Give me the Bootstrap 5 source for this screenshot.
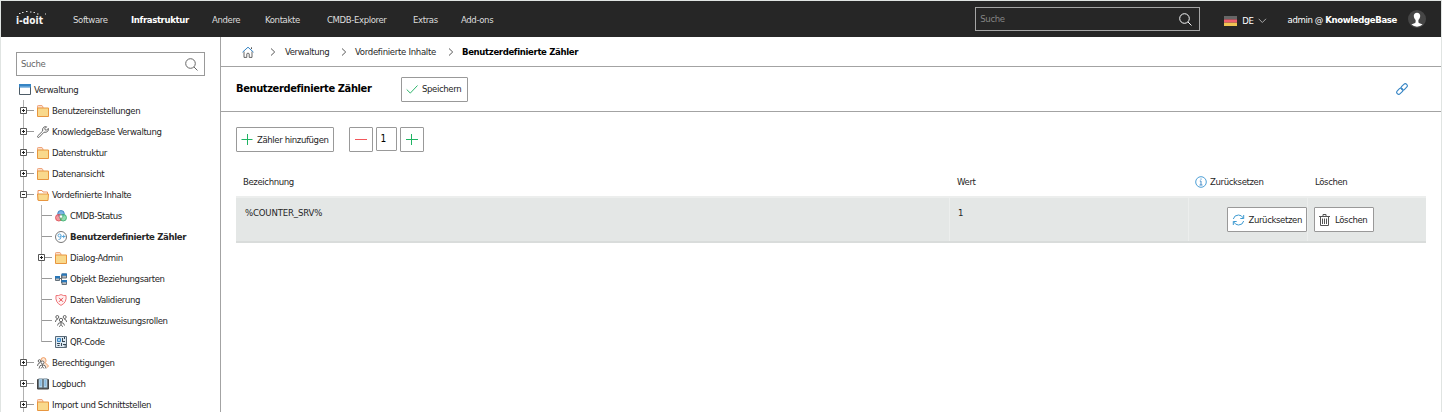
<!DOCTYPE html>
<html lang="de">
<head>
<meta charset="utf-8">
<meta name="viewport" content="width=device-width, initial-scale=1">
<title>i-doit – Benutzerdefinierte Zähler</title>
<link href="https://cdn.jsdelivr.net/npm/bootstrap@5.3.0/dist/css/bootstrap.min.css" rel="stylesheet">
<style>
html,body{height:100%}
body{font-family:"DejaVu Sans Condensed","DejaVu Sans",sans-serif;font-stretch:condensed;font-size:9.5px;letter-spacing:-.38px;line-height:14px;color:#262626;overflow:hidden;background:#fff;white-space:nowrap}
b,.fw-bold{letter-spacing:-.36px}
svg{display:block;flex:none;fill:none}
.frame{height:412px;border:1px solid #e0e4e2;border-bottom:0}
.topbar{height:36px;background:#262626;color:#ddd}
.brand{width:72px;padding-left:15px;letter-spacing:0}
.mainnav{display:grid;grid-template-columns:58px 81px 53px 62px 86px 48px 50px;padding-top:2px}
.mainnav a,.crumbs a{color:inherit;text-decoration:none}
.mainnav .active{color:#fff}
.topsearch{width:225px;height:24px;border:1px solid #a5a5a5;color:#858585;padding:0 7px 0 4px}
.flag-label{margin-left:5px}
.user{margin:2px 15px 0 21px}
.user svg{margin:-2px 0 0 11px}
.sidebar{width:219px;padding:15px 0 0 15px;overflow:hidden}
.sidesearch{width:189px;height:24px;border:1px solid #999;color:#666;padding:0 6px 0 4px}
.content{border-left:1px solid #a3a3a3}
.crumbs{height:30px;border-bottom:1px solid #a3a3a3;display:grid;grid-template-columns:29px 14px 56px 14px 93px 14px auto;padding-left:21px;align-items:center}
.crumbs a:nth-of-type(2){letter-spacing:-.3px}
.titlebar{height:45px;border-bottom:1px solid #a3a3a3;padding:0 33px 0 15px}
.titlebar h1{font-size:11px;line-height:16px;color:#000;width:165px;letter-spacing:-.37px}
.btn-tool{--bs-btn-font-size:9.5px;--bs-btn-line-height:14px;--bs-btn-padding-x:4px;--bs-btn-padding-y:0;--bs-btn-color:#262626;--bs-btn-bg:#fff;--bs-btn-border-color:#999;--bs-btn-border-radius:1px;height:25px;display:inline-flex;align-items:center;gap:4px;letter-spacing:-.38px}
.btn-roomy{padding-right:6px}
.toolbar{padding:15px 0 0 15px}
.stepper{margin-left:15px;gap:3px}
.count{width:21px;height:24px;border:1px solid #999;border-radius:1px;color:#000;padding:4px 0 0 4px;font-size:10px}
.tree{margin:3px 0 0;padding:0;list-style:none}
.tree li{height:21px;display:flex;align-items:center}
.tree li.root{padding-left:3px}
.tree span{margin-left:3px}
.tree .lv1{padding-left:4px;background:linear-gradient(#b0b0b0,#b0b0b0) 7px 0/1px 100% no-repeat}
.tree .lv2{padding-left:22px;background:linear-gradient(#b0b0b0,#b0b0b0) 7px 0/1px 100% no-repeat,linear-gradient(#b0b0b0,#b0b0b0) 25px 0/1px 100% no-repeat}
.tree .lv2.last{background-size:1px 100%,1px 11px}
.tree .arm{width:17px;height:9px}
.counters{margin:16px 15px 0 15px}
.cols{display:grid;grid-template-columns:713px 239px 119px 119px}
.thead-row{height:28px;align-items:center}
.trow{height:47px;background:#e4e7e6;border-top:2px solid #eceeed;border-bottom:2px solid #d9dcdb}
.trow>div+div{border-left:1px solid #eceeed}
.trow .val{padding:8px 0 0 8px}
.trow .name{padding-left:9px;letter-spacing:-.15px}
</style>
</head>
<body>
<svg width="0" height="0" class="position-absolute">
<defs>
<symbol id="folder" viewBox="0 0 12 12"><path d="M.5 3V1.200Q.5.500 1.200.500H5l1 1.500V3" fill="#fbe0cc" stroke="#efa57e"/><path d="M.5 3h11v8.500H.5z" fill="#f9d98c" stroke="#e8963f"/></symbol>
<symbol id="folder-open" viewBox="0 0 12 12"><path d="M1 11V1.500h4L6 3h4.500v2" fill="#fff" stroke="#ec9160"/><path d="M.5 5h11l-.5 6.500H1.200z" fill="#f9d98c" stroke="#e8963f"/></symbol>
<symbol id="plus-box" viewBox="0 0 17 9"><path d="M7 4.500h7" stroke="#999"/><path d="M.5 1.500h6v6h-6z" fill="#fff" stroke="#555"/><path d="M2 4.500h3M3.500 3v3" stroke="#222"/></symbol>
<symbol id="minus-box" viewBox="0 0 17 9"><path d="M7 4.500h7" stroke="#999"/><path d="M.5 1.500h6v6h-6z" fill="#fff" stroke="#555"/><path d="M2 4.500h3" stroke="#222"/></symbol>
<symbol id="branch" viewBox="0 0 17 9"><path d="M4 4.500h10" stroke="#999"/></symbol>
<symbol id="lens" viewBox="0 0 13 13"><circle cx="5.500" cy="5.500" r="4.800" stroke="currentColor"/><path d="m9 9 3.500 3.500" stroke="currentColor"/></symbol>
<symbol id="chev" viewBox="0 0 6 8"><path d="m1 .5 3.700 3.500L1 7.500" stroke="#444" stroke-width=".9"/></symbol>
<symbol id="people" viewBox="0 0 12 12"><g stroke="#444" stroke-width=".8"><circle cx="2.300" cy="2" r="1.500"/><circle cx="9.700" cy="2" r="1.500"/><circle cx="6" cy="5" r="1.700"/><path d="M.4 7Q.5 4.200 2.800 4.200M11.600 7Q11.500 4.200 9.200 4.200M2.500 10.500Q2.800 7.500 6 7.500T9.500 10.500M6 8v1.500L4.300 11.800M6 9.500l1.700 2.300"/></g></symbol>
</defs>
</svg>
<div class="frame d-flex flex-column">
<header class="topbar d-flex align-items-center flex-shrink-0">
  <div class="brand">
    <svg width="34" height="18" viewBox="0 0 34 18"><text x="0" y="13.500" font-family="DejaVu Sans" font-size="11" font-weight="bold" fill="#f5f5f5" textLength="27" lengthAdjust="spacingAndGlyphs">i-doit</text><path d="M3 3.500h1.500M6 2.500h1.500M10 1.500h1.500M14 2h1.500M17.500 2.500h1.500M21 4h1.500M29 4h1" stroke="#ddd"/></svg>
  </div>
  <nav class="mainnav me-auto">
    <a href="#">Software</a><a href="#" class="active fw-bold">Infrastruktur</a><a href="#">Andere</a><a href="#">Kontakte</a><a href="#">CMDB-Explorer</a><a href="#">Extras</a><a href="#">Add-ons</a>
  </nav>
  <div class="topsearch d-flex align-items-center justify-content-between"><span>Suche</span><svg width="13" height="13" class="text-light"><use href="#lens"/></svg></div>
  <div class="d-flex align-items-center text-white ms-4 pt-1">
    <svg width="13" height="10" viewBox="0 0 13 10"><path d="M0 0h13v3.400H0z" fill="#666"/><path d="M0 3.400h13v3.300H0z" fill="#ed5f6d"/><path d="M0 6.700h13V10H0z" fill="#efc452"/></svg>
    <span class="flag-label">DE</span>
    <svg class="ms-1" width="9" height="6" viewBox="0 0 9 6"><path d="m.7.800 3.600 3.700L8 .8" stroke="#aaa"/></svg>
  </div>
  <div class="user d-flex align-items-center text-white"><span>admin @ <b>KnowledgeBase</b></span>
    <svg width="18" height="18" viewBox="0 0 18 18"><circle cx="9" cy="9" r="9" fill="#464646"/><path d="M9 2.700c2.200 0 3.300 1.500 3.200 3.400-.1 1.800-.9 3.200-1.800 3.800v2.300c.2 1.200 3 1.400 4.200 2.400A8.500 8.500 0 0 1 3.400 14.600c1.200-1 4-1.200 4.200-2.400V9.900C6.700 9.300 5.900 7.900 5.800 6.100 5.700 4.200 6.800 2.700 9 2.700z" fill="#fff"/></svg>
  </div>
</header>
<div class="d-flex flex-grow-1">
<aside class="sidebar flex-shrink-0">
  <div class="sidesearch d-flex align-items-center justify-content-between"><span>Suche</span><svg width="13" height="13"><use href="#lens"/></svg></div>
  <ul class="tree">
    <li class="root"><svg width="12" height="11" viewBox="0 0 12 11"><path d="M.5.500h11v10H.5z" fill="#fff" stroke="#4d5b66"/><path d="M0 0h12v3.500H0z" fill="#3584c4"/><path d="M1 3h10" stroke="#8fc0e8"/></svg><span>Verwaltung</span></li>
    <li class="lv1"><svg class="arm"><use href="#plus-box"/></svg><svg width="12" height="12"><use href="#folder"/></svg><span>Benutzereinstellungen</span></li>
    <li class="lv1"><svg class="arm"><use href="#plus-box"/></svg><svg width="12" height="12" viewBox="0 0 12 12"><path d="M.8 9.800 5.700 5Q5 2.500 6.800 1.200 8.200.3 9.600.8L7.800 2.600l.4 1.300 1.300.3 1.800-1.800q.5 1.600-.6 2.900Q9.400 6.700 7 6.200l-4.800 5Q1.200 11.700.7 11.200.3 10.500.8 9.800z" stroke="#555" stroke-width=".9"/></svg><span>KnowledgeBase Verwaltung</span></li>
    <li class="lv1"><svg class="arm"><use href="#plus-box"/></svg><svg width="12" height="12"><use href="#folder"/></svg><span>Datenstruktur</span></li>
    <li class="lv1"><svg class="arm"><use href="#plus-box"/></svg><svg width="12" height="12"><use href="#folder"/></svg><span>Datenansicht</span></li>
    <li class="lv1"><svg class="arm"><use href="#minus-box"/></svg><svg width="12" height="12"><use href="#folder-open"/></svg><span>Vordefinierte Inhalte</span></li>
    <li class="lv2"><svg class="arm"><use href="#branch"/></svg><svg width="12" height="12" viewBox="0 0 12 12"><circle cx="6" cy="3.800" r="3.300" fill="#7db5e3" stroke="#2e78bd" stroke-width=".8"/><circle cx="3.800" cy="7.700" r="3.300" fill="#f0606a" fill-opacity=".65" stroke="#d8474e" stroke-width=".8"/><circle cx="8.200" cy="7.700" r="3.300" fill="#5fcf8c" fill-opacity=".7" stroke="#35ab68" stroke-width=".8"/><circle cx="6" cy="6.500" r="1.200" fill="#fff"/></svg><span>CMDB-Status</span></li>
    <li class="lv2"><svg class="arm"><use href="#branch"/></svg><svg width="12" height="12" viewBox="0 0 12 12"><circle cx="6" cy="6" r="5.500" stroke="#777"/><path d="M6 4.500a1.500 1.500 0 1 0-3 0 1.500 1.500 0 0 0 3 0V6Q6 8.600 3.500 8.500M7 5.500h3.500M8.700 3.700v3.500" stroke="#4d9fd6" stroke-width=".9"/></svg><span class="fw-bold">Benutzerdefinierte Zähler</span></li>
    <li class="lv2"><svg class="arm"><use href="#plus-box"/></svg><svg width="12" height="12"><use href="#folder"/></svg><span>Dialog-Admin</span></li>
    <li class="lv2"><svg class="arm"><use href="#branch"/></svg><svg width="12" height="12" viewBox="0 0 12 12"><path d="M4 5.500h2.500M6.500 2v8" stroke="#666"/><path d="M.5 3.500h4v4h-4zM7 1h4.500v4H7zM7 7.500h4.500v4H7z" fill="#bbb" stroke="#65717b"/><path d="M0 3h5v2.500H0zM6.500.500H12v2.300H6.500zM6.500 7H12v2.300H6.500z" fill="#2876b8"/></svg><span>Objekt Beziehungsarten</span></li>
    <li class="lv2"><svg class="arm"><use href="#branch"/></svg><svg width="12" height="12" viewBox="0 0 12 12"><path d="M6 .6Q8.500 2 11 1.600 12 8.500 6 11.400 0 8.500 1 1.600 3.500 2 6 .6z" fill="#fff3f3" stroke="#ec6368" stroke-width=".9"/><path d="m4 3.800 4 4M8 3.800l-4 4" stroke="#e5484e"/></svg><span>Daten Validierung</span></li>
    <li class="lv2"><svg class="arm"><use href="#branch"/></svg><svg width="12" height="12"><use href="#people"/></svg><span>Kontaktzuweisungsrollen</span></li>
    <li class="lv2 last"><svg class="arm"><use href="#branch"/></svg><svg width="12" height="12" viewBox="0 0 12 12"><path d="M.5.500h11v11H.5z" fill="#dce8f2" stroke="#596a78"/><path d="M2.500 2.500h3v3h-3z" fill="#a9d3f3" stroke="#3b87c4"/><path d="M7.500 2v4M9.500 1v2M10 5.500H8M2 7.500h3M2.500 9.500h2M6.500 7v3M8 8.500h3M9.500 10h1.500" stroke="#344552"/></svg><span>QR-Code</span></li>
    <li class="lv1"><svg class="arm"><use href="#plus-box"/></svg><svg width="12" height="12" viewBox="0 0 12 12"><path d="M4 3.500Q3.700.6 6.500.6 9 .6 9 3.500 9 5 8.200 5.700L11.500 9l-1.600 1.700" fill="#fde5d2" stroke="#ee9c62"/><g stroke="#444" stroke-width=".8"><circle cx="2.500" cy="4" r="1.300"/><circle cx="5.500" cy="5.500" r="1.500" fill="#fff"/><path d="M.5 9Q.6 6.200 2.800 6M2 11.500Q2.300 7.800 5.500 7.700T9 11.500M5.500 8v1.500l-1.500 2M5.500 9.500l1.500 2"/></g></svg><span>Berechtigungen</span></li>
    <li class="lv1"><svg class="arm"><use href="#plus-box"/></svg><svg width="12" height="12" viewBox="0 0 12 12"><path d="M.5 1.500h11v9.500H.5z" fill="#555" stroke="#444"/><path d="M1.700.8H5.600v9H1.700zM6.400.8h3.900v9H6.400z" fill="#b5d8f0" stroke="#5c6b76" stroke-width=".6"/><path d="M3 3h1.500M3 5h1.500M3 7h1.500M7.500 3H9M7.500 5H9M7.500 7H9" stroke="#3b87c4" stroke-width=".7"/></svg><span>Logbuch</span></li>
    <li class="lv1"><svg class="arm"><use href="#plus-box"/></svg><svg width="12" height="12"><use href="#folder"/></svg><span>Import und Schnittstellen</span></li>
  </ul>
</aside>
<main class="content flex-grow-1">
  <nav class="crumbs">
    <svg width="12" height="12" viewBox="0 0 12 12"><path d="M2 5.500v5.900h2.800V8q0-.8 1.200-.8t1.200.8v3.400H10V5.500" stroke="#555" stroke-width=".9"/><path d="M.5 6.200 6 1.200l5.500 5" stroke="#3584c4"/><path d="M9.500 3V1.300" stroke="#555"/></svg>
    <svg width="6" height="8" style="margin-left:-1px"><use href="#chev"/></svg><a href="#">Verwaltung</a><svg width="6" height="8"><use href="#chev"/></svg><a href="#">Vordefinierte Inhalte</a><svg width="6" height="8"><use href="#chev"/></svg><b class="text-black">Benutzerdefinierte Zähler</b>
  </nav>
  <div class="titlebar d-flex align-items-center">
    <h1 class="fw-bold m-0">Benutzerdefinierte Zähler</h1>
    <button class="btn btn-tool btn-roomy"><svg width="12" height="12" viewBox="0 0 12 12"><path d="m.7 6.500 3.600 3.600L11.500 2.500" stroke="#2fb56c"/></svg>Speichern</button>
    <svg class="ms-auto" width="12" height="12" viewBox="0 0 12 12"><g stroke="#3584c4" stroke-width="1.100"><rect x="-3.500" y="-2" width="7" height="4" rx="2" transform="translate(8.200 3.800) rotate(-45)"/><rect x="-3.500" y="-2" width="7" height="4" rx="2" transform="translate(3.800 8.200) rotate(-45)"/></g></svg>
  </div>
  <div class="toolbar d-flex">
    <button class="btn btn-tool"><svg width="12" height="13" viewBox="0 0 12 13"><path d="M.5 6.500h11M6.500 1v11" stroke="#1fb463"/></svg>Zähler hinzufügen</button>
    <div class="stepper d-flex">
      <button class="btn btn-tool" aria-label="Weniger"><svg width="14" height="13" viewBox="0 0 14 13"><path d="M1 6.500h12" stroke="#f2575b"/></svg></button>
      <div class="count">1</div>
      <button class="btn btn-tool" aria-label="Mehr"><svg width="14" height="13" viewBox="0 0 14 13"><path d="M1 6.500h12M6.500 1v11" stroke="#1fb463"/></svg></button>
    </div>
  </div>
  <div class="counters">
    <div class="cols thead-row"><div style="padding-left:7px">Bezeichnung</div><div class="ps-2">Wert</div><div class="d-flex align-items-center" style="padding-left:7px;gap:3px"><svg width="12" height="12" viewBox="0 0 12 12"><circle cx="6" cy="6" r="5.300" stroke="#4d9fd6"/><path d="M4.800 5H6v4M4.500 9h3M6 2.500v1.200" stroke="#3584c4" stroke-width=".9"/></svg>Zurücksetzen</div><div class="ps-2">Löschen</div></div>
    <div class="cols trow">
      <div class="val name">%COUNTER_SRV%</div>
      <div class="val">1</div>
      <div class="d-flex justify-content-end align-items-center"><button class="btn btn-tool" style="gap:3px"><svg width="13" height="12" viewBox="0 0 13 12"><path d="M1.300 5Q2.300 1 6.500 1q3 0 5 3.200M11.700 1v3.500H8.300M11.700 7Q10.700 11 6.500 11q-3 0-5-3.200M1.300 11V7.500h3.400" stroke="#3d9ad1"/></svg>Zurücksetzen</button></div>
      <div class="d-flex align-items-center" style="padding-left:6px"><button class="btn btn-tool btn-roomy" style="gap:5px"><svg width="11" height="12" viewBox="0 0 11 12"><path d="M1.500 2.500v9h8v-9M0 2.500h11M4 2V.5h3V2M3.500 4.500V10M5.500 4.500V10M7.500 4.500V10" stroke="#555"/></svg>Löschen</button></div>
    </div>
  </div>
</main>
</div>
</div>
<script src="https://cdn.jsdelivr.net/npm/bootstrap@5.3.0/dist/js/bootstrap.bundle.min.js"></script>
</body>
</html>
